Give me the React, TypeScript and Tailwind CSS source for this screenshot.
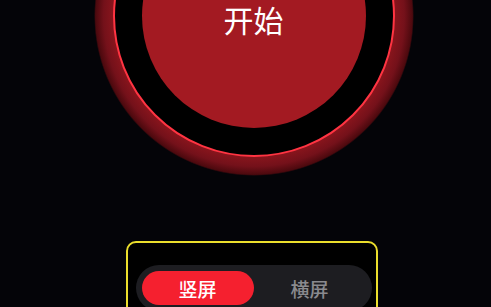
import React, { useState, type JSX } from 'react'

const App: React.FC = (): JSX.Element =>
{
    const [mode, setMode] = useState<'portrait' | 'landscape'>('portrait');

    return (
        <div
            className="w-[491px] h-[307px] overflow-hidden bg-[#040408] flex flex-col items-center"
            style={{ fontFamily: '"Noto Sans CJK SC", "Noto Sans", sans-serif' }}
        >
            {/* Start button */}
            <div className="mt-[-144px] ml-[16px] w-[320px] h-[320px] shrink-0 rounded-full flex items-center justify-center bg-[radial-gradient(circle_closest-side,#8e161d_86%,#74111a_94%,#4c090e_99%,#040408_100%)]">
                <div className="w-[282px] h-[282px] rounded-full border-2 border-[#ff3442] bg-black flex items-center justify-center">
                    <div className="w-[224px] h-[224px] rounded-full bg-[#a31a22] flex items-center justify-center pt-[6px]">
                        <span className="text-white text-[30px] leading-none">开始</span>
                    </div>
                </div>
            </div>

            {/* Orientation picker */}
            <div className="mt-[65px] ml-[12px] w-[252px] h-[110px] shrink-0 rounded-[10px] border-2 border-[#ebde2c] bg-black pt-[22px] pl-[8px]">
                <div className="w-[236px] rounded-full bg-[#1d1d21] p-[6px] flex">
                    <button
                        onClick={() => setMode('portrait')}
                        className={mode === 'portrait'
                            ? "w-[112px] h-[34px] rounded-full bg-[#f5202f] text-white text-[19px] font-medium leading-none"
                            : "w-[112px] h-[34px] rounded-full text-[#8a8a8e] text-[19px] font-medium leading-none"}
                    >
                        竖屏
                    </button>
                    <button
                        onClick={() => setMode('landscape')}
                        className={mode === 'landscape'
                            ? "w-[112px] h-[34px] rounded-full bg-[#f5202f] text-white text-[19px] font-medium leading-none"
                            : "w-[112px] h-[34px] rounded-full text-[#8a8a8e] text-[19px] font-medium leading-none"}
                    >
                        横屏
                    </button>
                </div>
            </div>
        </div>
    )
}

export default App
